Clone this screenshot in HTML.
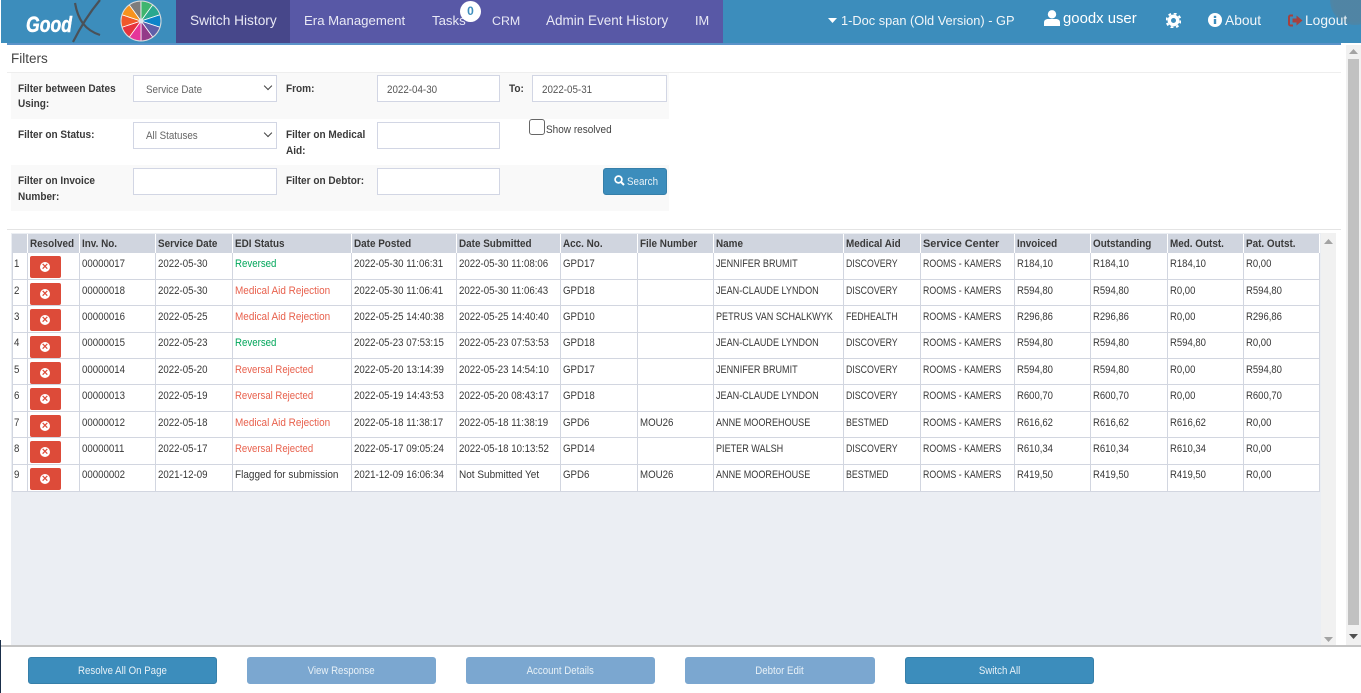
<!DOCTYPE html>
<html><head><meta charset="utf-8"><title>Switch History</title>
<style>
html,body{margin:0;padding:0;width:1361px;height:693px;overflow:hidden;background:#fff;font-family:"Liberation Sans",sans-serif;color:#333}
.a{position:absolute}
.t{position:absolute;white-space:nowrap;transform-origin:0 50%;transform:scaleX(.89);font-size:11px;line-height:14px;margin-top:1px}
.n{position:absolute;white-space:nowrap;color:#e9e9f5;font-size:13.6px;line-height:18px;top:12px}
.b{font-weight:bold;color:#3a3a3a;transform:scaleX(.913)}
.f{position:absolute;background:#fff;border:1px solid #d2d6e4;box-sizing:border-box}
.sel:after{content:"";position:absolute;right:5px;top:7px;width:5px;height:5px;border:solid #444;border-width:0 1.6px 1.6px 0;transform:rotate(45deg)}
table{position:absolute;left:12px;top:234px;width:1308px;border-collapse:separate;border-spacing:0;table-layout:fixed;background:#fff}
th{background:#d0d5df;height:19px;padding:0;border:0;border-right:1px solid #fff;text-align:left;font-size:11px;overflow:hidden;white-space:nowrap;color:#3a3a3a}
td{padding:0;border:solid #d2d6e0;border-width:0 1px 1px 0;font-size:11px;vertical-align:top;overflow:hidden;white-space:nowrap;color:#383838}
td:first-child{border-left:1px solid #d2d6e0}
th i,td i{display:inline-block;font-style:normal;transform-origin:0 50%;transform:scaleX(.88);margin-left:2px}
th i{transform:scaleX(.9)}
th:nth-child(12) i{transform:scaleX(.99)}
td:first-child i{margin-left:1px}
td i{margin-top:4px;line-height:14px}
tr{height:26px}
tr:nth-child(2),tr:nth-child(4),tr:nth-child(7),tr:nth-child(9),tr:nth-child(10){height:27px}
tr:nth-child(5) td i,tr:nth-child(10) td i{margin-top:3px}
td:nth-child(10) i{transform:scaleX(.825)}
td:nth-child(11) i,td:nth-child(12) i{transform:scaleX(.8)}
td:nth-child(n+13) i{transform:scaleX(.865)}
td b{display:block;width:31px;height:21.5px;margin:3px 0 0 2px;background:#dd4b39;border-radius:2px;position:relative}
td b:after{content:"×";position:absolute;left:10px;top:6px;width:10px;height:10px;border-radius:50%;background:#fff;color:#dd4b39;font-size:11px;line-height:10px;text-align:center;font-weight:bold}
td i.g{color:#00a65a}
td i.r{color:#e8604c;transform:scaleX(.905)}
td i.rr{color:#e8604c;transform:scaleX(.87)}
td i.w{transform:scaleX(.91)}
.btn{position:absolute;top:657px;height:27px;box-sizing:border-box;border:1px solid #367fa9;background:#3c8dbc;border-radius:3px;text-align:center;color:#e8f1f7;font-size:11px;line-height:26px}
.btn span{display:inline-block;transform:scaleX(.88)}
.dis{background:#7ba7d0;border-color:#7ba7d0}
</style></head><body>
<div class="a" style="left:1px;top:0;width:1360px;height:43px;background:#3c8dbc"></div>
<div class="a" style="left:7px;top:43px;width:1334px;height:2px;background:#5b93c9"></div>
<div class="a" style="left:1330px;top:-25px;width:50px;height:50px;border-radius:50%;background:radial-gradient(circle,#5d7f94 0,#5d7f94 60%,rgba(93,127,148,0) 100%);opacity:.6"></div>
<div class="a" style="left:176px;top:0;width:114px;height:43px;background:#47478a"></div>
<div class="a" style="left:290px;top:0;width:433px;height:43px;background:#5858a6"></div>

<div class="a" style="left:26px;top:12px;font:italic bold 22px/26px 'Liberation Sans',sans-serif;color:#fff;-webkit-text-stroke:.5px #fff;transform:scaleX(.8);transform-origin:0 0">Good</div>
<svg class="a" style="left:70px;top:0" width="36" height="44" viewBox="0 0 36 44"><path d="M5 3C8 20 15 30 30 35" fill="none" stroke="#4a5158" stroke-width="2.2"/><path d="M30 0C20 12 10 28 3 42" fill="none" stroke="#4a5158" stroke-width="2.2"/></svg>

<svg class="a" style="left:120px;top:0" width="42" height="42" viewBox="-21 -21 42 42">
<g stroke="#fff" stroke-width=".8">
<path fill="#7d7d7d" d="M0 0L-11.8-16.2A20 20 0 0 1 0-20Z"/>
<path fill="#3fb56e" d="M0 0L0-20A20 20 0 0 1 11.8-16.2Z"/>
<path fill="#2aa88f" d="M0 0L11.8-16.2A20 20 0 0 1 19-6.2Z"/>
<path fill="#0d84c9" d="M0 0L19-6.2A20 20 0 0 1 19 6.2Z"/>
<path fill="#5f5fa8" d="M0 0L19 6.2A20 20 0 0 1 11.8 16.2Z"/>
<path fill="#933a88" d="M0 0L11.8 16.2A20 20 0 0 1 0 20Z"/>
<path fill="#e5369a" d="M0 0L0 20A20 20 0 0 1 -11.8 16.2Z"/>
<path fill="#e6343d" d="M0 0L-11.8 16.2A20 20 0 0 1 -19 6.2Z"/>
<path fill="#f0582a" d="M0 0L-19 6.2A20 20 0 0 1 -19 -6.2Z"/>
<path fill="#f7931e" d="M0 0L-19 -6.2A20 20 0 0 1 -11.8 -16.2Z"/>
</g><circle r="20" fill="none" stroke="#d8d8d8" stroke-width="1"/><circle r="2.5" fill="#dfe6ea"/></svg>

<div class="n" style="left:190px;font-size:13.7px">Switch History</div>
<div class="n" style="left:304px;font-size:13.2px">Era Management</div>
<div class="n" style="left:432px;font-size:13.2px">Tasks</div>
<div class="a" style="left:460px;top:1px;width:21px;height:21px;border-radius:50%;background:#fff;color:#3c8dbc;font:bold 12px/21px 'Liberation Sans',sans-serif;text-align:center">0</div>
<div class="n" style="left:492px;font-size:12.4px">CRM</div>
<div class="n" style="left:546px;font-size:13.5px">Admin Event History</div>
<div class="n" style="left:695px;font-size:12.8px">IM</div>

<svg class="a" style="left:828px;top:18px" width="9" height="6"><path d="M0 0H9L4.5 5Z" fill="#fff"/></svg>
<div class="n" style="left:841px;color:#f2f6f9;font-size:12.8px">1-Doc span (Old Version) - GP</div>
<svg class="a" style="left:1044px;top:10px" width="16" height="16" viewBox="0 0 16 16"><circle cx="8" cy="4.3" r="4.2" fill="#fff"/><path d="M0 16V12.5C0 10 2 9 4 9H12C14 9 16 10 16 12.5V16Z" fill="#fff"/></svg>
<div class="n" style="left:1063px;top:10px;color:#fff;font-size:14.9px">goodx user</div>
<svg class="a" style="left:1166px;top:13px" width="15" height="15" viewBox="0 0 15 15"><circle cx="7.5" cy="7.5" r="4.2" fill="none" stroke="#fff" stroke-width="3.4"/><circle cx="7.5" cy="7.5" r="7" fill="none" stroke="#fff" stroke-width="2" stroke-dasharray="2.8 2.7"/></svg>
<svg class="a" style="left:1208px;top:13px" width="14" height="14" viewBox="0 0 14 14"><circle cx="7" cy="7" r="7" fill="#fff"/><rect x="5.8" y="6" width="2.4" height="5" fill="#3c8dbc"/><rect x="5.8" y="2.8" width="2.4" height="2.2" fill="#3c8dbc"/></svg>
<div class="n" style="left:1225px;color:#f2f6f9;font-size:13.8px">About</div>
<svg class="a" style="left:1288px;top:14px" width="15" height="13" viewBox="0 0 15 13"><path d="M5 1.5H2.5A1.5 1.5 0 0 0 1 3V10A1.5 1.5 0 0 0 2.5 11.5H5" fill="none" stroke="#a5413f" stroke-width="2"/><path d="M4.5 4.5H8.5V1.5L14.5 6.5L8.5 11.5V8.5H4.5Z" fill="#a5413f"/></svg>
<div class="n" style="left:1305px;color:#f2f6f9;font-size:13.8px">Logout</div>

<div class="a" style="left:11px;top:51px;font-size:13.5px;line-height:16px;color:#444">Filters</div>
<div class="a" style="left:7px;top:72px;width:1334px;height:1px;background:#eee"></div>
<div class="a" style="left:11px;top:73px;width:658px;height:46px;background:#f9f9f9"></div>
<div class="a" style="left:11px;top:165px;width:658px;height:46px;background:#f9f9f9"></div>
<div class="a" style="left:7px;top:229px;width:1334px;height:1px;background:#e4e4e4"></div>

<div class="t b" style="left:18px;top:81px">Filter between Dates</div>
<div class="t b" style="left:18px;top:96px">Using:</div>
<div class="f sel" style="left:133px;top:75px;width:144px;height:27px"></div>
<div class="t" style="left:146px;top:82px;color:#666">Service Date</div>
<div class="t b" style="left:286px;top:81px">From:</div>
<div class="f" style="left:377px;top:75px;width:123px;height:27px"></div>
<div class="t" style="left:387px;top:82px;color:#555">2022-04-30</div>
<div class="t b" style="left:509px;top:81px">To:</div>
<div class="f" style="left:532px;top:75px;width:135px;height:27px"></div>
<div class="t" style="left:542px;top:82px;color:#555">2022-05-31</div>

<div class="t b" style="left:18px;top:127px">Filter on Status:</div>
<div class="f sel" style="left:133px;top:122px;width:144px;height:27px"></div>
<div class="t" style="left:146px;top:128px;color:#666">All Statuses</div>
<div class="t b" style="left:286px;top:127px">Filter on Medical</div>
<div class="t b" style="left:286px;top:143px">Aid:</div>
<div class="f" style="left:377px;top:122px;width:123px;height:27px"></div>
<div class="a" style="left:529px;top:119px;width:16px;height:16px;box-sizing:border-box;border:1px solid #666;border-radius:3px;background:#fff"></div>
<div class="t" style="left:546px;top:122px;color:#444;transform:scaleX(.91)">Show resolved</div>

<div class="t b" style="left:18px;top:173px">Filter on Invoice</div>
<div class="t b" style="left:18px;top:189px">Number:</div>
<div class="f" style="left:133px;top:168px;width:144px;height:27px"></div>
<div class="t b" style="left:286px;top:173px">Filter on Debtor:</div>
<div class="f" style="left:377px;top:168px;width:123px;height:27px"></div>
<div class="a" style="left:603px;top:168px;width:64px;height:27px;box-sizing:border-box;background:#3c8dbc;border:1px solid #367fa9;border-radius:3px"></div>
<svg class="a" style="left:614px;top:175px" width="11" height="11" viewBox="0 0 11 11"><circle cx="4.5" cy="4.5" r="3.4" fill="none" stroke="#fff" stroke-width="1.7"/><path d="M7 7L10 10" stroke="#fff" stroke-width="2"/></svg>
<div class="t" style="left:627px;top:174px;color:#e8f1f7">Search</div>

<div class="a" style="left:11px;top:233px;width:1310px;height:412px;background:#ebeef3"></div>
<div class="a" style="left:1321px;top:233px;width:15px;height:412px;background:#f1f1f1"></div>
<svg class="a" style="left:1324px;top:239px" width="9" height="6"><path d="M0 5H9L4.5 0Z" fill="#a3a3a3"/></svg>
<svg class="a" style="left:1324px;top:637px" width="9" height="6"><path d="M0 0H9L4.5 5Z" fill="#a3a3a3"/></svg>

<table>
<colgroup><col style="width:16px"><col style="width:52px"><col style="width:76px"><col style="width:77px"><col style="width:119px"><col style="width:105px"><col style="width:104px"><col style="width:77px"><col style="width:76px"><col style="width:130px"><col style="width:77px"><col style="width:94px"><col style="width:76px"><col style="width:77px"><col style="width:76px"><col style="width:76px"></colgroup>
<tr style="height:19px"><th></th><th><i>Resolved</i></th><th><i>Inv. No.</i></th><th><i>Service Date</i></th><th><i>EDI Status</i></th><th><i>Date Posted</i></th><th><i>Date Submitted</i></th><th><i>Acc. No.</i></th><th><i>File Number</i></th><th><i>Name</i></th><th><i>Medical Aid</i></th><th><i>Service Center</i></th><th><i>Invoiced</i></th><th><i>Outstanding</i></th><th><i>Med. Outst.</i></th><th><i>Pat. Outst.</i></th></tr>
<tr><td><i>1</i></td><td><b></b></td><td><i>00000017</i></td><td><i>2022-05-30</i></td><td><i class="g">Reversed</i></td><td><i>2022-05-30 11:06:31</i></td><td><i>2022-05-30 11:08:06</i></td><td><i>GPD17</i></td><td></td><td><i>JENNIFER BRUMIT</i></td><td><i>DISCOVERY</i></td><td><i>ROOMS - KAMERS</i></td><td><i>R184,10</i></td><td><i>R184,10</i></td><td><i>R184,10</i></td><td><i>R0,00</i></td></tr>
<tr><td><i>2</i></td><td><b></b></td><td><i>00000018</i></td><td><i>2022-05-30</i></td><td><i class="r">Medical Aid Rejection</i></td><td><i>2022-05-30 11:06:41</i></td><td><i>2022-05-30 11:06:43</i></td><td><i>GPD18</i></td><td></td><td><i>JEAN-CLAUDE LYNDON</i></td><td><i>DISCOVERY</i></td><td><i>ROOMS - KAMERS</i></td><td><i>R594,80</i></td><td><i>R594,80</i></td><td><i>R0,00</i></td><td><i>R594,80</i></td></tr>
<tr><td><i>3</i></td><td><b></b></td><td><i>00000016</i></td><td><i>2022-05-25</i></td><td><i class="r">Medical Aid Rejection</i></td><td><i>2022-05-25 14:40:38</i></td><td><i>2022-05-25 14:40:40</i></td><td><i>GPD10</i></td><td></td><td><i>PETRUS VAN SCHALKWYK</i></td><td><i>FEDHEALTH</i></td><td><i>ROOMS - KAMERS</i></td><td><i>R296,86</i></td><td><i>R296,86</i></td><td><i>R0,00</i></td><td><i>R296,86</i></td></tr>
<tr><td><i>4</i></td><td><b></b></td><td><i>00000015</i></td><td><i>2022-05-23</i></td><td><i class="g">Reversed</i></td><td><i>2022-05-23 07:53:15</i></td><td><i>2022-05-23 07:53:53</i></td><td><i>GPD18</i></td><td></td><td><i>JEAN-CLAUDE LYNDON</i></td><td><i>DISCOVERY</i></td><td><i>ROOMS - KAMERS</i></td><td><i>R594,80</i></td><td><i>R594,80</i></td><td><i>R594,80</i></td><td><i>R0,00</i></td></tr>
<tr><td><i>5</i></td><td><b></b></td><td><i>00000014</i></td><td><i>2022-05-20</i></td><td><i class="rr">Reversal Rejected</i></td><td><i>2022-05-20 13:14:39</i></td><td><i>2022-05-23 14:54:10</i></td><td><i>GPD17</i></td><td></td><td><i>JENNIFER BRUMIT</i></td><td><i>DISCOVERY</i></td><td><i>ROOMS - KAMERS</i></td><td><i>R594,80</i></td><td><i>R594,80</i></td><td><i>R0,00</i></td><td><i>R594,80</i></td></tr>
<tr><td><i>6</i></td><td><b></b></td><td><i>00000013</i></td><td><i>2022-05-19</i></td><td><i class="rr">Reversal Rejected</i></td><td><i>2022-05-19 14:43:53</i></td><td><i>2022-05-20 08:43:17</i></td><td><i>GPD18</i></td><td></td><td><i>JEAN-CLAUDE LYNDON</i></td><td><i>DISCOVERY</i></td><td><i>ROOMS - KAMERS</i></td><td><i>R600,70</i></td><td><i>R600,70</i></td><td><i>R0,00</i></td><td><i>R600,70</i></td></tr>
<tr><td><i>7</i></td><td><b></b></td><td><i>00000012</i></td><td><i>2022-05-18</i></td><td><i class="r">Medical Aid Rejection</i></td><td><i>2022-05-18 11:38:17</i></td><td><i>2022-05-18 11:38:19</i></td><td><i>GPD6</i></td><td><i>MOU26</i></td><td><i>ANNE MOOREHOUSE</i></td><td><i>BESTMED</i></td><td><i>ROOMS - KAMERS</i></td><td><i>R616,62</i></td><td><i>R616,62</i></td><td><i>R616,62</i></td><td><i>R0,00</i></td></tr>
<tr><td><i>8</i></td><td><b></b></td><td><i>00000011</i></td><td><i>2022-05-17</i></td><td><i class="rr">Reversal Rejected</i></td><td><i>2022-05-17 09:05:24</i></td><td><i>2022-05-18 10:13:52</i></td><td><i>GPD14</i></td><td></td><td><i>PIETER WALSH</i></td><td><i>DISCOVERY</i></td><td><i>ROOMS - KAMERS</i></td><td><i>R610,34</i></td><td><i>R610,34</i></td><td><i>R610,34</i></td><td><i>R0,00</i></td></tr>
<tr><td><i>9</i></td><td><b></b></td><td><i>00000002</i></td><td><i>2021-12-09</i></td><td><i class="w">Flagged for submission</i></td><td><i>2021-12-09 16:06:34</i></td><td><i class="w">Not Submitted Yet</i></td><td><i>GPD6</i></td><td><i>MOU26</i></td><td><i>ANNE MOOREHOUSE</i></td><td><i>BESTMED</i></td><td><i>ROOMS - KAMERS</i></td><td><i>R419,50</i></td><td><i>R419,50</i></td><td><i>R419,50</i></td><td><i>R0,00</i></td></tr>
</table>

<div class="a" style="left:1346px;top:45px;width:15px;height:600px;background:#f1f1f1"></div>
<div class="a" style="left:1348px;top:59px;width:11px;height:566px;background:#c1c1c1"></div>
<svg class="a" style="left:1349px;top:49px" width="9" height="6"><path d="M0 5H9L4.5 0Z" fill="#a3a3a3"/></svg>
<svg class="a" style="left:1349px;top:634px" width="9" height="6"><path d="M0 0H9L4.5 5Z" fill="#505050"/></svg>

<div class="a" style="left:0;top:645px;width:1361px;height:2px;background:#c4c4c4"></div>
<div class="a" style="left:0;top:640px;width:1px;height:53px;background:#1a2e4a"></div>
<div class="btn" style="left:28px;width:189px"><span>Resolve All On Page</span></div>
<div class="btn dis" style="left:247px;width:189px"><span>View Response</span></div>
<div class="btn dis" style="left:466px;width:189px"><span>Account Details</span></div>
<div class="btn dis" style="left:685px;width:190px"><span>Debtor Edit</span></div>
<div class="btn" style="left:905px;width:189px"><span>Switch All</span></div>
</body></html>
